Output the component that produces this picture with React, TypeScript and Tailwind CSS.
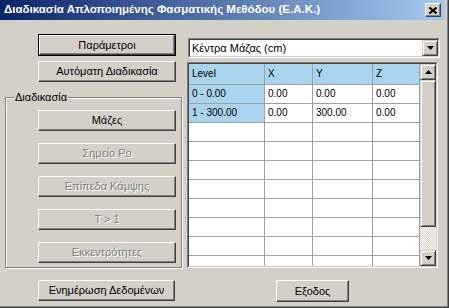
import React from "react";

const raised =
  "border border-t-white border-l-white border-r-[#404040] border-b-[#404040] shadow-[inset_-1px_-1px_#808080]";

function Btn({
  children,
  disabled,
  def,
  className = "",
}: {
  children: React.ReactNode;
  disabled?: boolean;
  def?: boolean;
  className?: string;
}) {
  const text = disabled
    ? "text-[#808080] [text-shadow:1px_1px_0_#ffffff]"
    : "text-black";
  const inner = (
    <div
      className={`w-full h-full flex items-center justify-center bg-[#d4d0c8] ${raised} ${text} text-[11px] leading-none`}
    >
      {children}
    </div>
  );
  if (def) {
    return <div className={`border border-black ${className}`}>{inner}</div>;
  }
  return <div className={className}>{inner}</div>;
}

function Arrow({ up }: { up?: boolean }) {
  return (
    <svg width="7" height="4" viewBox="0 0 7 4">
      {up ? (
        <polygon points="3.5,0 7,4 0,4" fill="#000" />
      ) : (
        <polygon points="0,0 7,0 3.5,4" fill="#000" />
      )}
    </svg>
  );
}

function SmallBtn({ up, className = "" }: { up?: boolean; className?: string }) {
  return (
    <div
      className={`flex items-center justify-center bg-[#d4d0c8] border border-t-[#d4d0c8] border-l-[#d4d0c8] border-r-[#404040] border-b-[#404040] shadow-[inset_1px_1px_#ffffff,inset_-1px_-1px_#808080] ${className}`}
    >
      <Arrow up={up} />
    </div>
  );
}

const cols = [
  { w: "w-[76px]" },
  { w: "w-[48px]" },
  { w: "w-[60px]" },
  { w: "w-[47px]" },
];

const data = [
  ["0 - 0.00", "0.00", "0.00", "0.00"],
  ["1 - 300.00", "0.00", "300.00", "0.00"],
  ["", "", "", ""],
  ["", "", "", ""],
  ["", "", "", ""],
  ["", "", "", ""],
  ["", "", "", ""],
  ["", "", "", ""],
  ["", "", "", ""],
  ["", "", "", ""],
];

export default function App() {
  return (
    <div className="w-[449px] h-[308px] bg-[#d4d0c8] overflow-hidden font-['Liberation_Sans',Arial,sans-serif] shadow-[inset_-1px_-1px_#404040,inset_-2px_-2px_#808080] pr-[4px] pb-[4px] flex flex-col">
      {/* Title bar */}
      <div className="h-[20px] shrink-0 flex items-center justify-between bg-[linear-gradient(to_right,#0a246a,#a6caf0)] pl-[4px] pr-[4px]">
        <span className="text-white font-bold text-[11.5px] leading-none">
          Διαδικασία Απλοποιημένης Φασματικής Μεθόδου (Ε.Α.Κ.)
        </span>
        <div
          className={`w-[16px] h-[14px] flex items-center justify-center bg-[#d4d0c8] border border-t-white border-l-white border-r-[#404040] border-b-[#404040] shadow-[inset_-1px_-1px_#808080]`}
        >
          <svg width="8" height="7" viewBox="0 0 8 7">
            <path d="M0.5 0.5 L7.5 6.5 M7.5 0.5 L0.5 6.5" stroke="#000" strokeWidth="2" />
          </svg>
        </div>
      </div>

      {/* Body */}
      <div className="flex flex-1">
        {/* Left column */}
        <div className="w-[187px] shrink-0 flex flex-col">
          <Btn def className="ml-[38px] mt-[14px] w-[138px] h-[22px]">
            Παράμετροι
          </Btn>
          <Btn className="ml-[38px] mt-[5px] w-[138px] h-[21px]">
            Αυτόματη Διαδικασία
          </Btn>
          <div className="relative ml-[5px] mt-[15px] w-[177px] h-[171px] border border-[#808080] shadow-[inset_1px_1px_#ffffff,1px_1px_#ffffff] flex flex-col pt-[12px] pl-[32px] gap-[12px]">
            <span className="absolute -top-[7px] left-[8px] px-[1px] bg-[#d4d0c8] text-[11px] leading-[13px] text-black">
              Διαδικασία
            </span>
            <Btn className="w-[138px] h-[21px]">Μάζες</Btn>
            <Btn disabled className="w-[138px] h-[21px]">
              Σημείο Ρο
            </Btn>
            <Btn disabled className="w-[138px] h-[21px]">
              Επίπεδα Κάμψης
            </Btn>
            <Btn disabled className="w-[138px] h-[21px]">
              T &gt; 1
            </Btn>
            <Btn disabled className="w-[138px] h-[21px]">
              Εκκεντρότητες
            </Btn>
          </div>
          <Btn className="ml-[38px] mt-[12px] w-[137px] h-[21px]">
            Ενημέρωση Δεδομένων
          </Btn>
        </div>

        {/* Right column */}
        <div className="flex flex-col">
          {/* Dropdown */}
          <div className="ml-[1px] mt-[18px] w-[252px] h-[20px] border border-t-[#808080] border-l-[#808080] border-r-white border-b-white">
            <div className="w-full h-full flex bg-white border border-t-[#404040] border-l-[#404040] border-r-[#d4d0c8] border-b-[#d4d0c8]">
              <div className="flex-1 flex items-center pl-[2px] text-[11px] text-black leading-none">
                Κέντρα Μάζας (cm)
              </div>
              <SmallBtn className="w-[16px] h-full" />
            </div>
          </div>

          {/* Grid */}
          <div className="mt-[4px] w-[251px] h-[206px] border border-t-[#808080] border-l-[#808080] border-r-white border-b-white">
            <div className="w-full h-full flex bg-white border border-t-[#404040] border-l-[#404040] border-r-[#d4d0c8] border-b-[#d4d0c8]">
              <div className="w-[231px] h-full overflow-hidden flex flex-col">
                <div className="flex h-[21px] shrink-0">
                  {["Level", "X", "Y", "Z"].map((h, i) => (
                    <div
                      key={h}
                      className={`${cols[i].w} h-full shrink-0 bg-[#a8d4ee] border-r border-b border-[#a0a0a0] flex items-center pl-[3px] text-[10px] leading-none text-black`}
                    >
                      {h}
                    </div>
                  ))}
                </div>
                {data.map((row, r) => (
                  <div key={r} className="flex h-[19px] shrink-0">
                    {row.map((c, i) => (
                      <div
                        key={i}
                        className={`${cols[i].w} h-full shrink-0 ${
                          i === 0 && r < 2 ? "bg-[#a8d4ee]" : "bg-white"
                        } border-r border-b border-[#a0a0a0] flex items-center pl-[3px] text-[10px] leading-none text-black`}
                      >
                        {c}
                      </div>
                    ))}
                  </div>
                ))}
              </div>
              {/* Scrollbar */}
              <div className="w-[16px] h-full flex flex-col">
                <SmallBtn up className="h-[16px] shrink-0" />
                <div className="h-[147px] shrink-0 bg-[#d4d0c8] border border-t-[#d4d0c8] border-l-[#d4d0c8] border-r-[#404040] border-b-[#404040] shadow-[inset_1px_1px_#ffffff,inset_-1px_-1px_#808080]" />
                <div className="flex-1 bg-[repeating-conic-gradient(#ffffff_0%_25%,#d4d0c8_0%_50%)] bg-size-[2px_2px]" />
                <SmallBtn className="h-[16px] shrink-0" />
              </div>
            </div>
          </div>

          <Btn className="ml-[89px] mt-[12px] w-[73px] h-[22px]">Εξοδος</Btn>
        </div>
      </div>
    </div>
  );
}
